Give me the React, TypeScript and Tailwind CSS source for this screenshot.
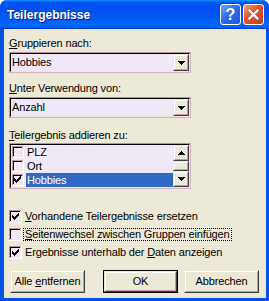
import React from "react";

const Arrow = ({ up = false }: { up?: boolean }) => {
  const rows = [0, 1, 2, 3];
  return (
    <svg width="7" height="4" shapeRendering="crispEdges">
      {rows.map((r) => {
        const y = up ? 3 - r : r;
        return <rect key={r} x={r} y={y} width={7 - 2 * r} height="1" fill="#000" />;
      })}
    </svg>
  );
};

const CheckBox = ({ size = 13, checked = false }: { size?: number; checked?: boolean }) => {
  const s = size;
  const off = s === 13 ? 3 : 2;
  const cols = [2, 3, 4, 3, 2, 1, 0];
  return (
    <svg width={s} height={s} shapeRendering="crispEdges" className="shrink-0">
      <rect x="0" y="0" width={s} height={s} fill="#ffffff" />
      <rect x="0" y="0" width={s - 1} height="1" fill="#b0949f" />
      <rect x="0" y="0" width="1" height={s - 1} fill="#b0949f" />
      <rect x="1" y="1" width={s - 2} height="1" fill="#000000" />
      <rect x="1" y="1" width="1" height={s - 2} fill="#000000" />
      <rect x={s - 2} y="1" width="1" height={s - 2} fill="#ece9d8" />
      <rect x="1" y={s - 2} width={s - 2} height="1" fill="#ece9d8" />
      <rect x="2" y="2" width={s - 4} height={s - 4} fill="#f0e8f6" />
      {checked &&
        cols.map((r, i) => (
          <rect key={i} x={off + i} y={off + r} width="1" height="3" fill="#000" />
        ))}
    </svg>
  );
};

const Raised = ({ className = "", children }: { className?: string; children?: React.ReactNode }) => (
  <div
    className={
      "border border-t-[#ece9d8] border-l-[#ece9d8] border-r-[#404040] border-b-[#404040] " + className
    }
  >
    <div className="w-full h-full border border-t-white border-l-white border-r-[#c896aa] border-b-[#c896aa] bg-[#ece9d8] flex items-center justify-center">
      {children}
    </div>
  </div>
);

const Sunken = ({ className = "", children }: { className?: string; children?: React.ReactNode }) => (
  <div
    className={
      "border border-t-[#b0949f] border-l-[#b0949f] border-r-[#d4b4c4] border-b-[#d4b4c4] " + className
    }
  >
    <div className="w-full h-full border border-t-black border-l-black border-r-[#ece9d8] border-b-[#ece9d8] bg-[#f0e8f6] flex">
      {children}
    </div>
  </div>
);

const Combo = ({ value }: { value: string }) => (
  <Sunken className="mt-[2px] w-[182px] h-[21px]">
    <div className="flex-1 flex items-center pl-[1px] leading-[13px]">{value}</div>
    <Raised className="w-[16px] h-[17px]">
      <Arrow />
    </Raised>
  </Sunken>
);

const ListRow = ({ label, checked = false, selected = false }: { label: string; checked?: boolean; selected?: boolean }) => (
  <div className="h-[14px] flex items-center">
    <div className="ml-[1px]">
      <CheckBox size={12} checked={checked} />
    </div>
    <div
      className={
        "ml-[2px] flex-1 h-full flex items-center pl-[1px] leading-[13px] " +
        (selected ? "bg-[#316ac5] text-white" : "")
      }
    >
      {label}
    </div>
  </div>
);

const CheckRow = ({
  checked = false,
  focus = false,
  children,
}: {
  checked?: boolean;
  focus?: boolean;
  children: React.ReactNode;
}) => (
  <div className="h-[13px] flex items-center">
    <CheckBox checked={checked} />
    <span
      className={
        "ml-[1px] h-[13px] px-[1px] leading-[11px] border whitespace-nowrap " +
        (focus ? "border-dotted border-black" : "border-transparent")
      }
    >
      {children}
    </span>
  </div>
);

export default function App() {
  return (
    <div className="w-[269px] h-[301px] bg-white font-['Liberation_Sans',Arial,sans-serif] text-[11px] tracking-[-0.15px] text-black">
      <div className="w-full h-full flex flex-col rounded-t-[7px] overflow-hidden bg-[#0553e4]">
        <div className="h-[29px] shrink-0 flex items-start justify-between bg-[linear-gradient(180deg,#0997ff,#0053ee_8%,#0050ee_40%,#06f_88%,#06f_93%,#005bff_95%,#003dd7_96%,#003dd7)]">
          <div className="pl-[7px] pt-[8px] text-[12px] leading-[15px] tracking-[0px] font-bold text-white [text-shadow:1px_1px_#0a1e8c]">
            Teilergebnisse
          </div>
          <div className="flex gap-[2px] pt-[4px] pr-[5px]">
            <div className="w-[21px] h-[21px] rounded-[3px] border border-white bg-[linear-gradient(135deg,#7aa6f8,#2f6cec_45%,#1c58dc)] flex items-center justify-center text-white font-bold text-[16px] leading-[16px] tracking-[0px]">
              ?
            </div>
            <div className="w-[21px] h-[21px] rounded-[3px] border border-white bg-[linear-gradient(135deg,#f2a07e,#e15a32_40%,#c83c12)] flex items-center justify-center">
              <svg width="11" height="11" viewBox="0 0 11 11">
                <path d="M1.5 1.5 L9.5 9.5 M9.5 1.5 L1.5 9.5" stroke="#fff" strokeWidth="2.2" strokeLinecap="square" />
              </svg>
            </div>
          </div>
        </div>
        <div className="flex-1 ml-[4px] mr-[3px] mb-[3px] bg-[#ece9d8] flex flex-col pl-[5px] pt-[8px]">
          <div className="h-[13px] leading-[13px]">
            <u>G</u>ruppieren nach:
          </div>
          <Combo value="Hobbies" />
          <div className="mt-[9px] h-[13px] leading-[13px]">
            <u>U</u>nter Verwendung von:
          </div>
          <Combo value="Anzahl" />
          <div className="mt-[11px] h-[13px] leading-[13px]">
            <u>T</u>eilergebnis addieren zu:
          </div>
          <Sunken className="mt-[1px] w-[182px] h-[46px]">
            <div className="flex-1 flex flex-col">
              <ListRow label="PLZ" />
              <ListRow label="Ort" />
              <ListRow label="Hobbies" checked selected />
            </div>
            <div className="w-[16px] flex flex-col">
              <Raised className="w-[16px] h-[16px]">
                <Arrow up />
              </Raised>
              <Raised className="w-[16px] h-[10px]" />
              <Raised className="w-[16px] h-[16px]">
                <Arrow />
              </Raised>
            </div>
          </Sunken>
          <div className="mt-[21px] flex flex-col gap-[5px]">
            <CheckRow checked>
              <u>V</u>orhandene Teilergebnisse ersetzen
            </CheckRow>
            <CheckRow focus>
              <u>S</u>eitenwechsel zwischen Gruppen einfügen
            </CheckRow>
            <CheckRow checked>
              Ergebnisse unterhalb der <u>D</u>aten anzeigen
            </CheckRow>
          </div>
          <div className="mt-[11px] flex">
            <Raised className="ml-[1px] w-[75px] h-[23px]">
              <span className="leading-[13px]">
                Alle <u>e</u>ntfernen
              </span>
            </Raised>
            <div className="ml-[18px] w-[75px] h-[23px] border border-black">
              <Raised className="w-full h-full">
                <span className="leading-[13px]">OK</span>
              </Raised>
            </div>
            <Raised className="ml-[6px] w-[75px] h-[23px]">
              <span className="leading-[13px]">Abbrechen</span>
            </Raised>
          </div>
        </div>
      </div>
    </div>
  );
}
